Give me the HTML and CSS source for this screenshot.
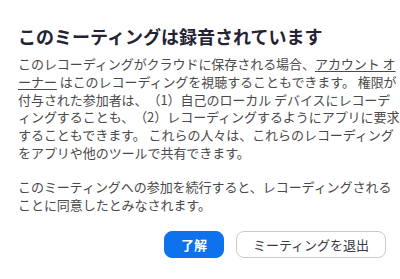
FILE: index.html
```html
<!DOCTYPE html>
<html lang="ja">
<head>
<meta charset="utf-8">
<link rel="stylesheet" href="styles.css">
</head>
<body>
<div class="dialog">
  <h1 class="title">このミーティングは録音されています</h1>
  <p class="text">このレコーディングがクラウドに保存される場合、<span class="link">アカウント オ</span><br><span class="link">ーナー</span> はこのレコーディングを視聴することもできます。 権限が<br>付与された参加者は、（1）自己のローカル デバイスにレコーデ<br>ィングすることも、（2）レコーディングするようにアプリに要求<br>することもできます。 これらの人々は、これらのレコーディング<br>をアプリや他のツールで共有できます。</p>
  <p class="text second">このミーティングへの参加を続行すると、レコーディングされる<br>ことに同意したとみなされます。</p>
  <div class="actions">
    <button class="btn primary">了解</button>
    <button class="btn secondary">ミーティングを退出</button>
  </div>
</div>
</body>
</html>
```

FILE: styles.css
```css
html, body {
  margin: 0;
  padding: 0;
  background: #ffffff;
}
.dialog {
  width: 400px;
  height: 279px;
  box-sizing: border-box;
  padding: 24px 14px 0 18px;
  font-family: "Noto Sans CJK JP", "Noto Sans", sans-serif;
  text-spacing-trim: space-all;
}
.title {
  margin: 0 0 7px 0;
  font-size: 18px;
  line-height: 24px;
  font-weight: 700;
  color: #232333;
  white-space: nowrap;
}
.text {
  margin: 0;
  font-size: 13px;
  line-height: 17.8px;
  color: #4a4a4a;
  white-space: nowrap;
  letter-spacing: -0.05px;
}
.text.second {
  margin-top: 16px;
}
.link {
  text-decoration: underline;
  text-underline-offset: 2px;
}
.actions {
  display: flex;
  justify-content: flex-end;
  gap: 12px;
  margin-top: 18px;
}
.btn {
  height: 27px;
  box-sizing: border-box;
  border-radius: 8px;
  font-family: "Noto Sans CJK JP", "Noto Sans", sans-serif;
  font-size: 13px;
  line-height: 1;
  padding: 0;
  display: flex;
  align-items: center;
  justify-content: center;
  text-spacing-trim: space-all;
}
.primary {
  width: 60px;
  background: #0e72ed;
  border: 1px solid #0e72ed;
  color: #ffffff;
  font-weight: 700;
}
.secondary {
  width: 150px;
  background: #ffffff;
  border: 1px solid #c9c9d1;
  color: #3a3a46;
}
```
